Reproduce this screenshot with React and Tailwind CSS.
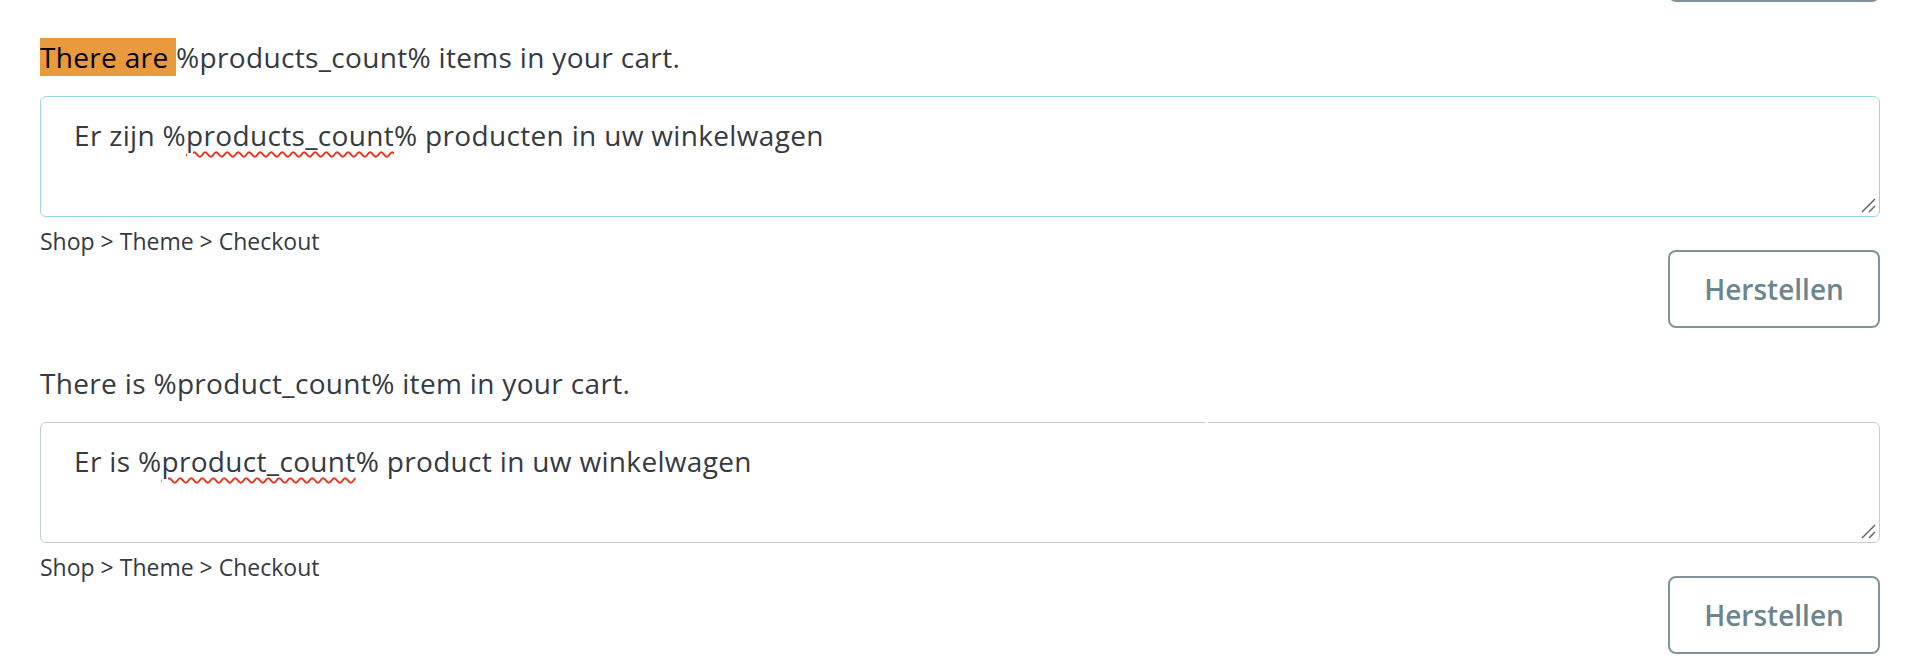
const entries = [
  {
    id: 'plural',
    label: (
      <>
        <span className="bg-[#e99a3c] text-black">There are </span>%products_count% items in your cart.
      </>
    ),
    before: 'Er zijn %',
    flagged: 'products_count',
    after: '% producten in uw winkelwagen',
    focused: true,
  },
  {
    id: 'single',
    label: <>There is %product_count% item in your cart.</>,
    before: 'Er is %',
    flagged: 'product_count',
    after: '% product in uw winkelwagen',
    focused: false,
  },
]

function ResizeGrip() {
  return (
    <svg className="absolute right-[3px] bottom-[3px]" width="16" height="16" viewBox="0 0 16 16">
      <line x1="2" y1="15" x2="15" y2="2" stroke="#5f6368" strokeWidth="1.4" />
      <line x1="9" y1="15" x2="15" y2="9" stroke="#5f6368" strokeWidth="1.4" />
    </svg>
  )
}

function ResetButton({ className = '' }) {
  return (
    <button
      type="button"
      className={`w-[212px] h-[78px] rounded-[8px] border-2 border-[#7f949b] bg-white text-[28px] font-semibold text-[#6c868e] ${className}`}
    >
      Herstellen
    </button>
  )
}

function TranslationField({ entry }) {
  return (
    <div className="mt-[34px]">
      <p className="text-[28px] leading-[42px] tracking-[0.33px]">{entry.label}</p>

      {/* Fake textarea so the spellcheck squiggle can be drawn */}
      <div
        className={`relative mt-[18px] h-[121px] rounded-[6px] border bg-white pt-[17px] pl-[33px] text-[28px] leading-[42px] tracking-[0.33px] ${
          entry.focused ? 'border-[#9dd2e6]' : 'border-[#bfcfd4]'
        }`}
      >
        {entry.before}
        <span className="underline decoration-wavy decoration-[#e8341c] decoration-[1.5px] underline-offset-[5px]">
          {entry.flagged}
        </span>
        {entry.after}
        {!entry.focused && <div className="absolute top-[-1px] left-[1164px] w-[3px] h-[2px] bg-white" />}
        <ResizeGrip />
      </div>

      <div className="flex items-start justify-between">
        <span className="mt-[6px] text-[23px] leading-[36px]">Shop &gt; Theme &gt; Checkout</span>
        <ResetButton className="mt-[33px]" />
      </div>
    </div>
  )
}

export default function App() {
  return (
    <div className="min-h-[660px] overflow-hidden bg-white px-[40px] text-[#363a41] font-['Open_Sans',sans-serif]">
      {/* bottom edge of the previous entry's button, scrolled mostly out of view */}
      <div className="flex justify-end">
        <div className="w-[212px] h-[78px] -mt-[76px] rounded-[8px] border-2 border-[#7f949b]" />
      </div>
      {entries.map((entry) => (
        <TranslationField key={entry.id} entry={entry} />
      ))}
    </div>
  )
}
